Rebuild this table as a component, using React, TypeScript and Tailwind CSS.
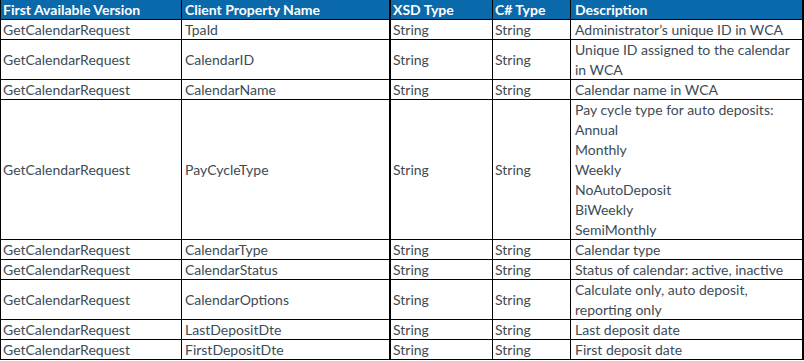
import React from "react";

type Row = {
  version: string;
  name: string;
  xsd: string;
  cs: string;
  desc: string[];
};

const rows: Row[] = [
  { version: "GetCalendarRequest", name: "TpaId", xsd: "String", cs: "String", desc: ["Administrator’s unique ID in WCA"] },
  { version: "GetCalendarRequest", name: "CalendarID", xsd: "String", cs: "String", desc: ["Unique ID assigned to the calendar", "in WCA"] },
  { version: "GetCalendarRequest", name: "CalendarName", xsd: "String", cs: "String", desc: ["Calendar name in WCA"] },
  {
    version: "GetCalendarRequest",
    name: "PayCycleType",
    xsd: "String",
    cs: "String",
    desc: ["Pay cycle type for auto deposits:", "Annual", "Monthly", "Weekly", "NoAutoDeposit", "BiWeekly", "SemiMonthly"],
  },
  { version: "GetCalendarRequest", name: "CalendarType", xsd: "String", cs: "String", desc: ["Calendar type"] },
  { version: "GetCalendarRequest", name: "CalendarStatus", xsd: "String", cs: "String", desc: ["Status of calendar: active, inactive"] },
  { version: "GetCalendarRequest", name: "CalendarOptions", xsd: "String", cs: "String", desc: ["Calculate only, auto deposit,", "reporting only"] },
  { version: "GetCalendarRequest", name: "LastDepositDte", xsd: "String", cs: "String", desc: ["Last deposit date"] },
  { version: "GetCalendarRequest", name: "FirstDepositDte", xsd: "String", cs: "String", desc: ["First deposit date"] },
];

const cell = "border-b border-black flex items-center overflow-hidden whitespace-nowrap";

export default function App() {
  return (
    <div className="w-[804px] h-[361px] bg-white text-[14px] text-[#3d4b55]" style={{ fontFamily: "Lato, 'Open Sans', sans-serif" }}>
      <div className="grid grid-cols-[182px_209px_102px_78px_233px]">
        {/* Header */}
        <div className={`${cell} h-[20px] bg-[#0a69ab] text-white font-bold border-l border-r pl-[2px]`}>First Available Version</div>
        <div className={`${cell} h-[20px] bg-[#0a69ab] text-white font-bold border-r-2 pl-[3px]`}>Client Property Name</div>
        <div className={`${cell} h-[20px] bg-[#0a69ab] text-white font-bold border-r pl-[2px]`}>XSD Type</div>
        <div className={`${cell} h-[20px] bg-[#0a69ab] text-white font-bold border-r pl-[2px]`}>C# Type</div>
        <div className={`${cell} h-[20px] bg-[#0a69ab] text-white font-bold border-r-2 pl-[4px]`}>Description</div>

        {rows.map((r) => {
          const h = r.desc.length * 20;
          return (
            <React.Fragment key={r.name}>
              <div className={`${cell} border-l border-r pl-[2px]`} style={{ height: h }}>{r.version}</div>
              <div className={`${cell} border-r-2 pl-[3px]`} style={{ height: h }}>{r.name}</div>
              <div className={`${cell} border-r pl-[2px]`} style={{ height: h }}>{r.xsd}</div>
              <div className={`${cell} border-r pl-[2px]`} style={{ height: h }}>{r.cs}</div>
              <div className="border-b border-r-2 border-black pl-[4px] leading-[20px] whitespace-nowrap overflow-hidden" style={{ height: h }}>
                {r.desc.map((d) => (
                  <div key={d} className="h-[20px] -mb-[0px]">{d}</div>
                ))}
              </div>
            </React.Fragment>
          );
        })}
      </div>
    </div>
  );
}
